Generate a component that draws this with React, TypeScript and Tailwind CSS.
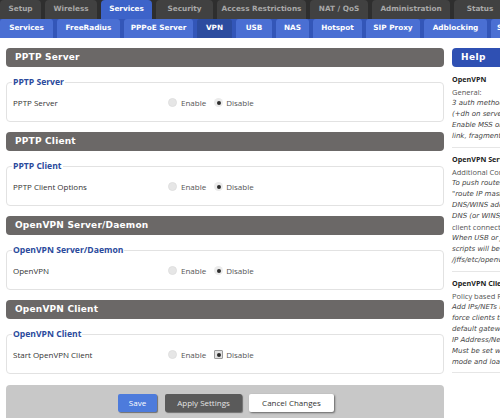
import React from "react";

const topTabs: { label: string; w: string; active?: boolean }[] = [
  { label: "Setup", w: "w-[41px]" },
  { label: "Wireless", w: "w-[52px]" },
  { label: "Services", w: "w-[51px]", active: true },
  { label: "Security", w: "w-[57px]" },
  { label: "Access Restrictions", w: "w-[89px]" },
  { label: "NAT / QoS", w: "w-[58px]" },
  { label: "Administration", w: "w-[78px]" },
  { label: "Status", w: "w-[52px]" },
];

const subTabs: { label: string; w: string; active?: boolean }[] = [
  { label: "Services", w: "w-[53px]" },
  { label: "FreeRadius", w: "w-[63px]" },
  { label: "PPPoE Server", w: "w-[69px]" },
  { label: "VPN", w: "w-[35px]", active: true },
  { label: "USB", w: "w-[36px]" },
  { label: "NAS", w: "w-[33px]" },
  { label: "Hotspot", w: "w-[49px]" },
  { label: "SIP Proxy", w: "w-[54px]" },
  { label: "Adblocking", w: "w-[63px]" },
];

function Radio({ checked, focus }: { checked?: boolean; focus?: boolean }) {
  if (focus) {
    return (
      <span className="w-[9px] h-[9px] rounded-[1px] border border-[#9a9a9a] bg-[#e2e2e2] flex items-center justify-center shrink-0">
        <span className="w-[4px] h-[4px] rounded-full bg-[#2a2a2a]" />
      </span>
    );
  }
  if (checked) {
    return (
      <span className="w-[9px] h-[9px] rounded-full bg-[#ebebeb] flex items-center justify-center shrink-0">
        <span className="w-[4px] h-[4px] rounded-full bg-[#2e2e2e]" />
      </span>
    );
  }
  return <span className="w-[9px] h-[9px] rounded-full bg-[#e6e6e6] border border-[#e0e0e0] shrink-0" />;
}

function Section({
  title,
  legend,
  label,
  focus,
}: {
  title: string;
  legend: string;
  label: string;
  focus?: boolean;
}) {
  return (
    <div className="flex flex-col">
      <div className="h-[19px] rounded-[4px] bg-[#6b6867] text-white font-bold text-[9px] tracking-[0.2px] pl-[9px] flex items-center font-['DejaVu_Sans',sans-serif]">
        {title}
      </div>
      <div className="mt-[15px] h-[40px] rounded-[4px] border border-[#e2e2e2] relative flex items-center pt-[1px] pl-[6px]">
        <span className="absolute left-[5px] top-[-7px] bg-white px-[1px] leading-[12px] text-[8.6px] font-bold text-[#2b4a9c]">
          {legend}
        </span>
        <span className="w-[155px] text-[8px] text-[#333]">{label}</span>
        <div className="flex items-center text-[8px] text-[#555]">
          <Radio />
          <span className="ml-[4px]">Enable</span>
          <span className="ml-[8px] flex items-center">
            <Radio checked={!focus} focus={focus} />
          </span>
          <span className="ml-[3px]">Disable</span>
        </div>
      </div>
    </div>
  );
}

function HelpBlock({
  title,
  intro,
  lines,
  first,
  last,
}: {
  title: string;
  intro: string;
  lines: { t: string; i?: boolean }[];
  first?: boolean;
  last?: boolean;
}) {
  return (
    <div
      className={
        first
          ? "pt-[7px] pb-[5px] border-b border-[#e6e6e6]"
          : last
          ? "pt-[6px] pb-[4px] border-b border-[#e6e6e6]"
          : "pt-[6px] pb-[5px] border-b border-[#e6e6e6]"
      }
    >
      <div className="h-[11px] leading-[11px] font-bold text-[7.2px] text-[#222] mb-[2px]">{title}</div>
      <div className="leading-[11px] text-[7.5px] text-[#555]">{intro}</div>
      {lines.map((l, k) => (
        <div
          key={k}
          className={
            l.i
              ? "leading-[11px] text-[7px] text-[#444] italic font-['DejaVu_Sans',sans-serif]"
              : "leading-[11px] text-[7.5px] text-[#555]"
          }
        >
          {l.t}
        </div>
      ))}
    </div>
  );
}

export default function App() {
  return (
    <div className="w-[500px] h-[418px] overflow-hidden bg-white font-['Open_Sans',sans-serif] whitespace-nowrap">
      <div className="flex h-[19px] bg-[#2e2e2e] gap-[4px] overflow-hidden font-['DejaVu_Sans',sans-serif]">
        {topTabs.map((t) => (
          <div
            key={t.label}
            className={
              t.active
                ? `${t.w} shrink-0 rounded-t-[4px] bg-[#3d63c9] text-white text-[7.3px] font-bold flex items-center justify-center`
                : `${t.w} shrink-0 rounded-t-[4px] bg-[#414141] text-[#a8a8a8] text-[7.3px] font-bold flex items-center justify-center`
            }
          >
            {t.label}
          </div>
        ))}
      </div>
      <div className="flex h-[19px] bg-[#3356b8] gap-[4px] overflow-hidden font-['DejaVu_Sans',sans-serif]">
        {subTabs.map((t) => (
          <div
            key={t.label}
            className={
              t.active
                ? `${t.w} shrink-0 rounded-t-[3px] bg-[#2c4c9f] text-white text-[7.3px] font-bold flex items-center justify-center`
                : `${t.w} shrink-0 rounded-t-[3px] bg-[#4a6fd3] text-white text-[7.3px] font-bold flex items-center justify-center`
            }
          >
            {t.label}
          </div>
        ))}
        <div className="w-[70px] shrink-0 rounded-t-[3px] bg-[#4a6fd3] text-white text-[7.3px] font-bold flex items-center pl-[6px]">
          Speedchecker
        </div>
      </div>
      <div className="flex pt-[10px]">
        <div className="ml-[6px] w-[438px] shrink-0 flex flex-col gap-[10px]">
          <Section title="PPTP Server" legend="PPTP Server" label="PPTP Server" />
          <Section title="PPTP Client" legend="PPTP Client" label="PPTP Client Options" />
          <Section title="OpenVPN Server/Daemon" legend="OpenVPN Server/Daemon" label="OpenVPN" />
          <Section title="OpenVPN Client" legend="OpenVPN Client" label="Start OpenVPN Client" focus />
          <div className="mt-[1px] h-[40px] rounded-[4px] bg-[#c8c8c8] flex items-start pt-[9px] pl-[112px] text-[8px]">
            <div className="w-[39px] h-[18px] bg-[#4d7bdc] text-white flex items-center justify-center rounded-[2px] shadow-[1px_1px_1px_rgba(0,0,0,0.45)]">
              Save
            </div>
            <div className="ml-[8px] w-[77px] h-[18px] bg-[#5a5a5a] text-[#e4e4e4] flex items-center justify-center rounded-[2px] shadow-[1px_1px_1px_rgba(0,0,0,0.45)]">
              Apply Settings
            </div>
            <div className="ml-[7px] w-[85px] h-[18px] bg-white text-[#333] flex items-center justify-center rounded-[2px] shadow-[1px_1px_2px_rgba(0,0,0,0.5)]">
              Cancel Changes
            </div>
          </div>
        </div>
        <div className="ml-[8px] w-[200px] shrink-0 flex flex-col">
          <div className="h-[19px] rounded-l-[4px] bg-[#2f50b3] text-white font-bold text-[9px] tracking-[0.4px] pl-[9px] flex items-center font-['DejaVu_Sans',sans-serif]">
            Help
          </div>
          <HelpBlock
            first
            title="OpenVPN"
            intro="General:"
            lines={[
              { t: "3 auth methods: PKI (Cert), Static Key,", i: true },
              { t: "(+dh on server) and username/password.", i: true },
              { t: "Enable MSS only on one side of the", i: true },
              { t: "link, fragment on both sides.", i: true },
            ]}
          />
          <HelpBlock
            title="OpenVPN Server/Daemon"
            intro="Additional Config:"
            lines={[
              { t: "To push routes to clients add \"push", i: true },
              { t: "\"route IP mask gateway\"\", similarly for", i: true },
              { t: "DNS/WINS add \"push \"dhcp-option", i: true },
              { t: "DNS (or WINS) IP\"\". To block", i: true },
              { t: "client connections use the firewall." },
              { t: "When USB or JFFS2 is mounted,", i: true },
              { t: "scripts will be stored in", i: true },
              { t: "/jffs/etc/openvpn/", i: true },
            ]}
          />
          <HelpBlock
            last
            title="OpenVPN Client"
            intro="Policy based Routing:"
            lines={[
              { t: "Add IPs/NETs in the form 0.0.0.0/0 to", i: true },
              { t: "force clients to use the tunnel as", i: true },
              { t: "default gateway. One line per", i: true },
              { t: "IP Address/Net.", i: true },
              { t: "Must be set with routed", i: true },
              { t: "mode and load balancing.", i: true },
            ]}
          />
        </div>
      </div>
    </div>
  );
}
